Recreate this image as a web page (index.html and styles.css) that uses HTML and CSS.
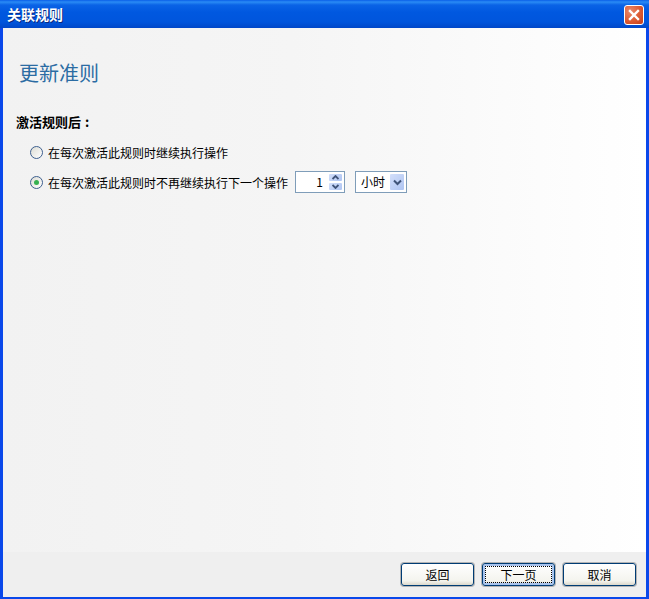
FILE: index.html
```html
<!DOCTYPE html>
<html lang="zh">
<head>
<meta charset="utf-8">
<title>关联规则</title>
<link rel="stylesheet" href="styles.css">
</head>
<body>
<div class="window">
  <div class="titlebar">
    <span class="title">关联规则</span>
    <span class="close">
      <svg width="14" height="14" viewBox="0 0 14 14"><path d="M3 3L11 11M11 3L3 11" stroke="#fff" stroke-width="2.4" stroke-linecap="square" fill="none"/></svg>
    </span>
  </div>
  <div class="client">
    <main class="content">
      <h1 class="heading">更新准则</h1>
      <div class="label">激活规则后 :</div>
      <div class="option first">
        <span class="radio"></span>
        <span>在每次激活此规则时继续执行操作</span>
      </div>
      <div class="option">
        <span class="radio checked"><span class="dot"></span></span>
        <span>在每次激活此规则时不再继续执行下一个操作</span>
        <span class="spinner">
          <span class="spin-value">1</span>
          <span class="spin-btns">
            <span class="spin-btn"><svg width="7" height="5" viewBox="0 0 7 5"><path d="M0.5 4L3.5 1L6.5 4" stroke="#3f5378" stroke-width="1.8" fill="none"/></svg></span>
            <span class="spin-btn"><svg width="7" height="5" viewBox="0 0 7 5"><path d="M0.5 1L3.5 4L6.5 1" stroke="#3f5378" stroke-width="1.8" fill="none"/></svg></span>
          </span>
        </span>
        <span class="combo">
          <span class="combo-value">小时</span>
          <span class="combo-btn"><svg width="9" height="7" viewBox="0 0 9 7"><path d="M1 1.5L4.5 5L8 1.5" stroke="#3f5378" stroke-width="2" fill="none"/></svg></span>
        </span>
      </div>
    </main>
    <footer class="footer">
      <button class="btn">返回</button>
      <button class="btn default"><span class="focus">下一页</span></button>
      <button class="btn">取消</button>
    </footer>
  </div>
</div>
</body>
</html>
```
FILE: styles.css
```css
* { box-sizing: border-box; }
html, body { margin: 0; height: 100%; overflow: hidden; }
body { font-family: "Noto Sans CJK SC", "Liberation Sans", sans-serif; font-size: 12px; color: #000; }
.window { width: 649px; height: 599px; display: flex; flex-direction: column; background: #0a48ea; padding: 0 3px 2px; }
.titlebar {
  height: 28px; margin: 0 -3px; padding: 0 5px 0 7px;
  display: flex; align-items: center; justify-content: space-between;
  background: linear-gradient(#0a5fe8 0, #2a8bf5 2px, #0a63e6 5px, #0058e0 12px, #0055dc 22px, #0047c8 28px);
}
.title { color: #fff; font-size: 14px; font-weight: 700; line-height: 16px; text-shadow: 1px 1px 0 #0a2a80; }
.close {
  width: 20px; height: 20px; margin-top: 2px; border: 1px solid #fff; border-radius: 3px;
  display: flex; align-items: center; justify-content: center;
  background: radial-gradient(circle at 30% 30%, #e98a6c, #dc5a32 55%, #c23c18);
}
.client { flex: 1; display: flex; flex-direction: column; min-height: 0; }
.content { flex: 1; padding: 32px 0 0 13px; background: linear-gradient(90deg, #f2f2f2 0, #f5f5f5 45%, #ffffff 100%); }
.heading { margin: 0 0 0 3px; font-size: 20px; line-height: 26px; font-weight: 400; color: #2b6ca3; }
.label { margin-top: 28px; font-size: 13px; font-weight: 700; line-height: 16px; word-spacing: 1px; }
.option { display: flex; align-items: center; margin-left: 14px; height: 22px; margin-top: 8px; gap: 5px; white-space: nowrap; }
.option.first { margin-top: 11px; }
.radio { width: 13px; height: 13px; border-radius: 50%; border: 1px solid #3d5f8f; background: linear-gradient(135deg, #dcdcd4, #fff); display: flex; align-items: center; justify-content: center; }
.dot { width: 5px; height: 5px; border-radius: 50%; background: #35b050; }
.spinner { margin-left: 2px; width: 50px; height: 22px; border: 1px solid #7f9db9; background: #fff; display: flex; padding: 1px; }
.spin-value { flex: 1; text-align: right; line-height: 18px; padding-right: 5px; }
.spin-btns { width: 15px; display: flex; flex-direction: column; }
.spin-btn { flex: 1; display: flex; align-items: center; justify-content: center; background: linear-gradient(135deg, #d3dffa, #aec4f2); border: 1px solid #fff; border-radius: 2px; }
.combo { margin-left: 5px; width: 52px; height: 22px; border: 1px solid #7f9db9; background: #fff; display: flex; padding: 1px; }
.combo-value { flex: 1; line-height: 18px; padding-left: 4px; }
.combo-btn { width: 16px; display: flex; align-items: center; justify-content: center; background: linear-gradient(135deg, #d3dffa, #aec4f2); border: 1px solid #fff; border-radius: 2px; }
.footer { height: 45px; background: #efefef; display: flex; justify-content: flex-end; align-items: flex-start; gap: 8px; padding: 11px 10px 0 0; }
.btn {
  width: 73px; height: 23px; padding: 0; font: inherit; color: #000;
  border: 1px solid #003c74; border-radius: 3px;
  background: linear-gradient(#fff, #f4f4ee 80%, #dcd8cc);
  box-shadow: 0 0 0 1px #b4b4b4;
  display: flex; align-items: center; justify-content: center;
}
.btn.default { box-shadow: 0 0 0 1px #b4b4b4, inset 0 0 0 2px #a9c4ee; }
.focus { width: 67px; height: 17px; border: 1px dotted #000; line-height: 15px; text-align: center; }
```
